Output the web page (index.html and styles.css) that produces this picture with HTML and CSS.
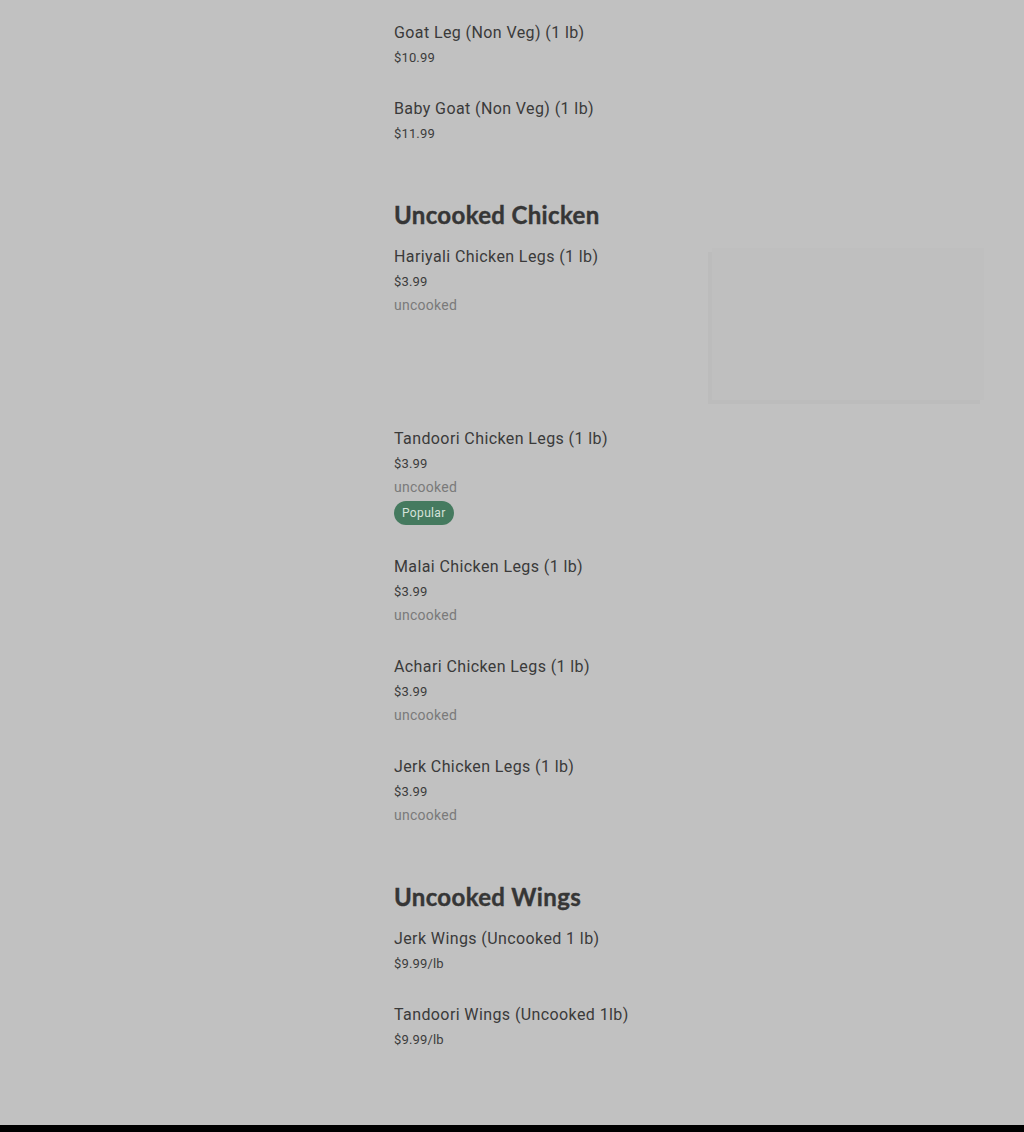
FILE: index.html
```html
<!DOCTYPE html>
<html>
<head>
<meta charset="utf-8">
<link rel="stylesheet" href="styles.css">
</head>
<body>
<main class="menu">
  <section class="section first">
    <div class="item">
      <div class="info">
        <div class="name">Goat Leg (Non Veg) (1 lb)</div>
        <div class="price">$10.99</div>
      </div>
    </div>
    <div class="item">
      <div class="info">
        <div class="name">Baby Goat (Non Veg) (1 lb)</div>
        <div class="price">$11.99</div>
      </div>
    </div>
  </section>

  <section class="section">
    <h2 class="heading">Uncooked Chicken</h2>
    <div class="item has-image">
      <div class="info">
        <div class="name">Hariyali Chicken Legs (1 lb)</div>
        <div class="price">$3.99</div>
        <div class="desc">uncooked</div>
      </div>
      <div class="thumb"></div>
    </div>
    <div class="item">
      <div class="info">
        <div class="name">Tandoori Chicken Legs (1 lb)</div>
        <div class="price">$3.99</div>
        <div class="desc">uncooked</div>
        <span class="badge">Popular</span>
      </div>
    </div>
    <div class="item">
      <div class="info">
        <div class="name">Malai Chicken Legs (1 lb)</div>
        <div class="price">$3.99</div>
        <div class="desc">uncooked</div>
      </div>
    </div>
    <div class="item">
      <div class="info">
        <div class="name">Achari Chicken Legs (1 lb)</div>
        <div class="price">$3.99</div>
        <div class="desc">uncooked</div>
      </div>
    </div>
    <div class="item">
      <div class="info">
        <div class="name">Jerk Chicken Legs (1 lb)</div>
        <div class="price">$3.99</div>
        <div class="desc">uncooked</div>
      </div>
    </div>
  </section>

  <section class="section">
    <h2 class="heading">Uncooked Wings</h2>
    <div class="item">
      <div class="info">
        <div class="name">Jerk Wings (Uncooked 1 lb)</div>
        <div class="price">$9.99/lb</div>
      </div>
    </div>
    <div class="item">
      <div class="info">
        <div class="name">Tandoori Wings (Uncooked 1lb)</div>
        <div class="price">$9.99/lb</div>
      </div>
    </div>
  </section>
</main>
<footer class="footer"></footer>
</body>
</html>
```

FILE: styles.css
```css
html, body {
  margin: 0;
  padding: 0;
}
body {
  background: #c1c1c1;
  font-family: Roboto, "Liberation Sans", sans-serif;
  color: #383838;
  min-height: 1132px;
  display: flex;
  flex-direction: column;
}
.menu {
  margin-left: 394px;
  width: 590px;
  padding-top: 21px;
  padding-bottom: 46px;
}
.section {
  display: flex;
  flex-direction: column;
}
.heading {
  margin: 26px 0 14px;
  font-size: 24px;
  line-height: 32px;
  font-weight: 700;
  letter-spacing: 0.35px;
  -webkit-text-stroke: 0.4px #363636;
  color: #363636;
  font-family: Lato, "Open Sans", sans-serif;
}
.item {
  display: flex;
  justify-content: space-between;
  padding-bottom: 28px;
}
.item.has-image {
  padding-bottom: 27px;
}
.info {
  display: flex;
  flex-direction: column;
  align-items: flex-start;
}
.name {
  font-size: 16px;
  line-height: 24px;
  letter-spacing: 0.4px;
  color: #3a3a3a;
}
.price {
  font-size: 13px;
  line-height: 22px;
  padding-top: 2px;
  letter-spacing: 0.15px;
  color: #3c3c3c;
}
.desc {
  font-size: 14px;
  line-height: 24px;
  letter-spacing: 0.25px;
  color: #7a7a7a;
}
.badge {
  margin: 2px 0;
  height: 24px;
  line-height: 24px;
  padding: 0 8px;
  border-radius: 12px;
  background: #457a5f;
  color: #d6e2db;
  font-size: 12px;
  letter-spacing: 0.35px;
}
.thumb {
  width: 272px;
  height: 152px;
  margin-top: 3px;
  background: #bfbfbf;
  box-shadow: -4px 4px 0 #bcbcbc;
}
.footer {
  flex: 1;
  background: #000;
}
```
